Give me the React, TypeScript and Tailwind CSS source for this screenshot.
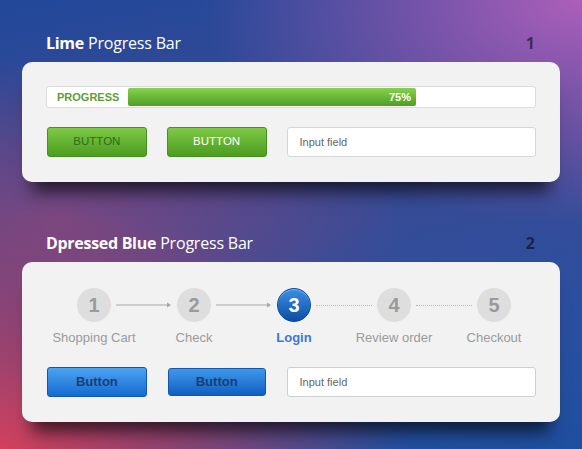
import React from "react";

const steps = [
  { n: "1", label: "Shopping Cart" },
  { n: "2", label: "Check" },
  { n: "3", label: "Login", active: true },
  { n: "4", label: "Review order" },
  { n: "5", label: "Checkout" },
];

function Arrow() {
  return (
    <svg width="56" height="8" viewBox="0 0 56 8" className="block">
      <line x1="0" y1="4" x2="54" y2="4" stroke="#a8a8a8" strokeWidth="1" />
      <path d="M51 1.5 L55 4 L51 6.5 Z" fill="#a8a8a8" />
    </svg>
  );
}

function Dotted() {
  return <div className="w-[56px] border-t border-dotted border-[#b8b8b8]" />;
}

export default function App() {
  return (
    <div
      className="w-[582px] h-[449px] overflow-hidden bg-[radial-gradient(ellipse_65%_50%_at_100%_0%,#ad5fba_0%,rgba(160,90,180,0.6)_45%,transparent_100%),radial-gradient(ellipse_70%_55%_at_0%_100%,#d2405c_0%,rgba(195,62,92,0.65)_45%,transparent_100%),radial-gradient(ellipse_60%_35%_at_10%_48%,rgba(135,70,125,0.8)_0%,transparent_100%),linear-gradient(170deg,#23489a_0%,#3b4a92_40%,#2b4fa0_75%,#1f4f9f_100%)] pt-[31px] px-[22px]"
      style={{ fontFamily: '"Liberation Sans", Arial, sans-serif' }}
    >
      {/* Title 1 */}
      <div className="flex items-center justify-between px-6 h-[24px]">
        <div className="text-[16px] text-white" style={{ fontFamily: '"Open Sans", sans-serif' }}>
          <span className="font-bold tracking-[-0.3px]">Lime</span>{" "}
          <span className="tracking-[-0.2px]">Progress Bar</span>
        </div>
        <div className="text-[16px] font-bold text-black/55 pr-[1px]" style={{ fontFamily: '"Open Sans", sans-serif' }}>1</div>
      </div>

      {/* Card 1 */}
      <div className="mt-[7px] w-[538px] h-[120px] rounded-[10px] bg-[#f2f2f2] shadow-[0_20px_16px_-10px_rgba(0,0,0,0.65)] px-6 pt-6">
        <div className="flex items-center h-[22px] rounded-[3px] border border-[#dcdcdc] bg-white">
          <div className="w-[81px] pl-[10px] text-[11px] font-bold text-[#5f9e34]">PROGRESS</div>
          <div className="h-[18px] w-[288px] rounded-[2px] bg-gradient-to-b from-[#86d14e] to-[#4e9f22] flex items-center justify-end pr-[5px]">
            <span className="text-[11px] font-bold text-white">75%</span>
          </div>
        </div>
        <div className="flex gap-5 mt-[19px] ml-[1px]">
          <div className="w-[100px] h-[30px] rounded-[3px] border border-[#45911f] bg-gradient-to-b from-[#7ec946] to-[#4c9d1f] flex items-center justify-center text-[11.5px] text-[#2f6a16]">BUTTON</div>
          <div className="w-[100px] h-[30px] rounded-[3px] border border-[#45911f] bg-gradient-to-b from-[#7ec946] to-[#4c9d1f] flex items-center justify-center text-[11.5px] text-white">BUTTON</div>
          <div className="w-[250px] h-[30px] rounded-[3px] border border-[#d6d6d6] bg-white flex items-center pl-[12px] text-[11px] text-[#666]">Input field</div>
        </div>
      </div>

      {/* Title 2 */}
      <div className="flex items-center justify-between px-6 h-[24px] mt-[49px]">
        <div className="text-[16px] text-white" style={{ fontFamily: '"Open Sans", sans-serif' }}>
          <span className="font-bold tracking-[-0.3px]">Dpressed Blue</span>{" "}
          <span className="tracking-[-0.2px]">Progress Bar</span>
        </div>
        <div className="text-[16px] font-bold text-black/55 pr-[1px]" style={{ fontFamily: '"Open Sans", sans-serif' }}>2</div>
      </div>

      {/* Card 2 */}
      <div className="mt-[7px] w-[538px] h-[160px] rounded-[10px] bg-[#f2f2f2] shadow-[0_20px_16px_-10px_rgba(0,0,0,0.65)] px-6 pt-[26px]">
        <div className="flex items-center pl-[31px]">
          {steps.map((s, i) => (
            <React.Fragment key={s.n}>
              {s.active ? (
                <div className="w-[34px] h-[34px] rounded-full bg-gradient-to-b from-[#3b8fe6] to-[#0b4ea6] border border-[#0a4795] shadow-[inset_0_1px_0_rgba(255,255,255,0.35)] flex items-center justify-center text-[20px] font-bold text-white">{s.n}</div>
              ) : (
                <div className="w-[34px] h-[34px] rounded-full bg-[#dedede] flex items-center justify-center text-[20px] font-bold text-[#9a9a9a]">{s.n}</div>
              )}
              {i < steps.length - 1 && (
                <div className="w-[66px] flex justify-center">{i < 2 ? <Arrow /> : <Dotted />}</div>
              )}
            </React.Fragment>
          ))}
        </div>
        <div className="grid grid-cols-[repeat(5,100px)] -ml-[2px] mt-[8px]">
          {steps.map((s) => (
            <div key={s.n} className={`text-center text-[13px] leading-[16px] ${s.active ? "font-bold text-[#3b78d8]" : "text-[#9a9a9a]"}`}>{s.label}</div>
          ))}
        </div>
        <div className="flex gap-5 mt-[21px] ml-[1px]">
          <div className="w-[100px] h-[30px] rounded-[3px] border border-[#1257ad] bg-gradient-to-b from-[#4ba3f2] to-[#136acf] flex items-center justify-center text-[13px] font-bold text-[#173f78]">Button</div>
          <div className="w-[98px] h-[28px] mt-[1px] ml-[1px] rounded-[3px] border border-[#1257ad] bg-gradient-to-b from-[#3f98ea] to-[#0f5fc0] flex items-center justify-center text-[13px] font-bold text-[#173f78]">Button</div>
          <div className="w-[250px] h-[30px] ml-[1px] rounded-[3px] border border-[#cfcfcf] bg-white flex items-center pl-[12px] text-[11px] text-[#666]">Input field</div>
        </div>
      </div>
    </div>
  );
}
